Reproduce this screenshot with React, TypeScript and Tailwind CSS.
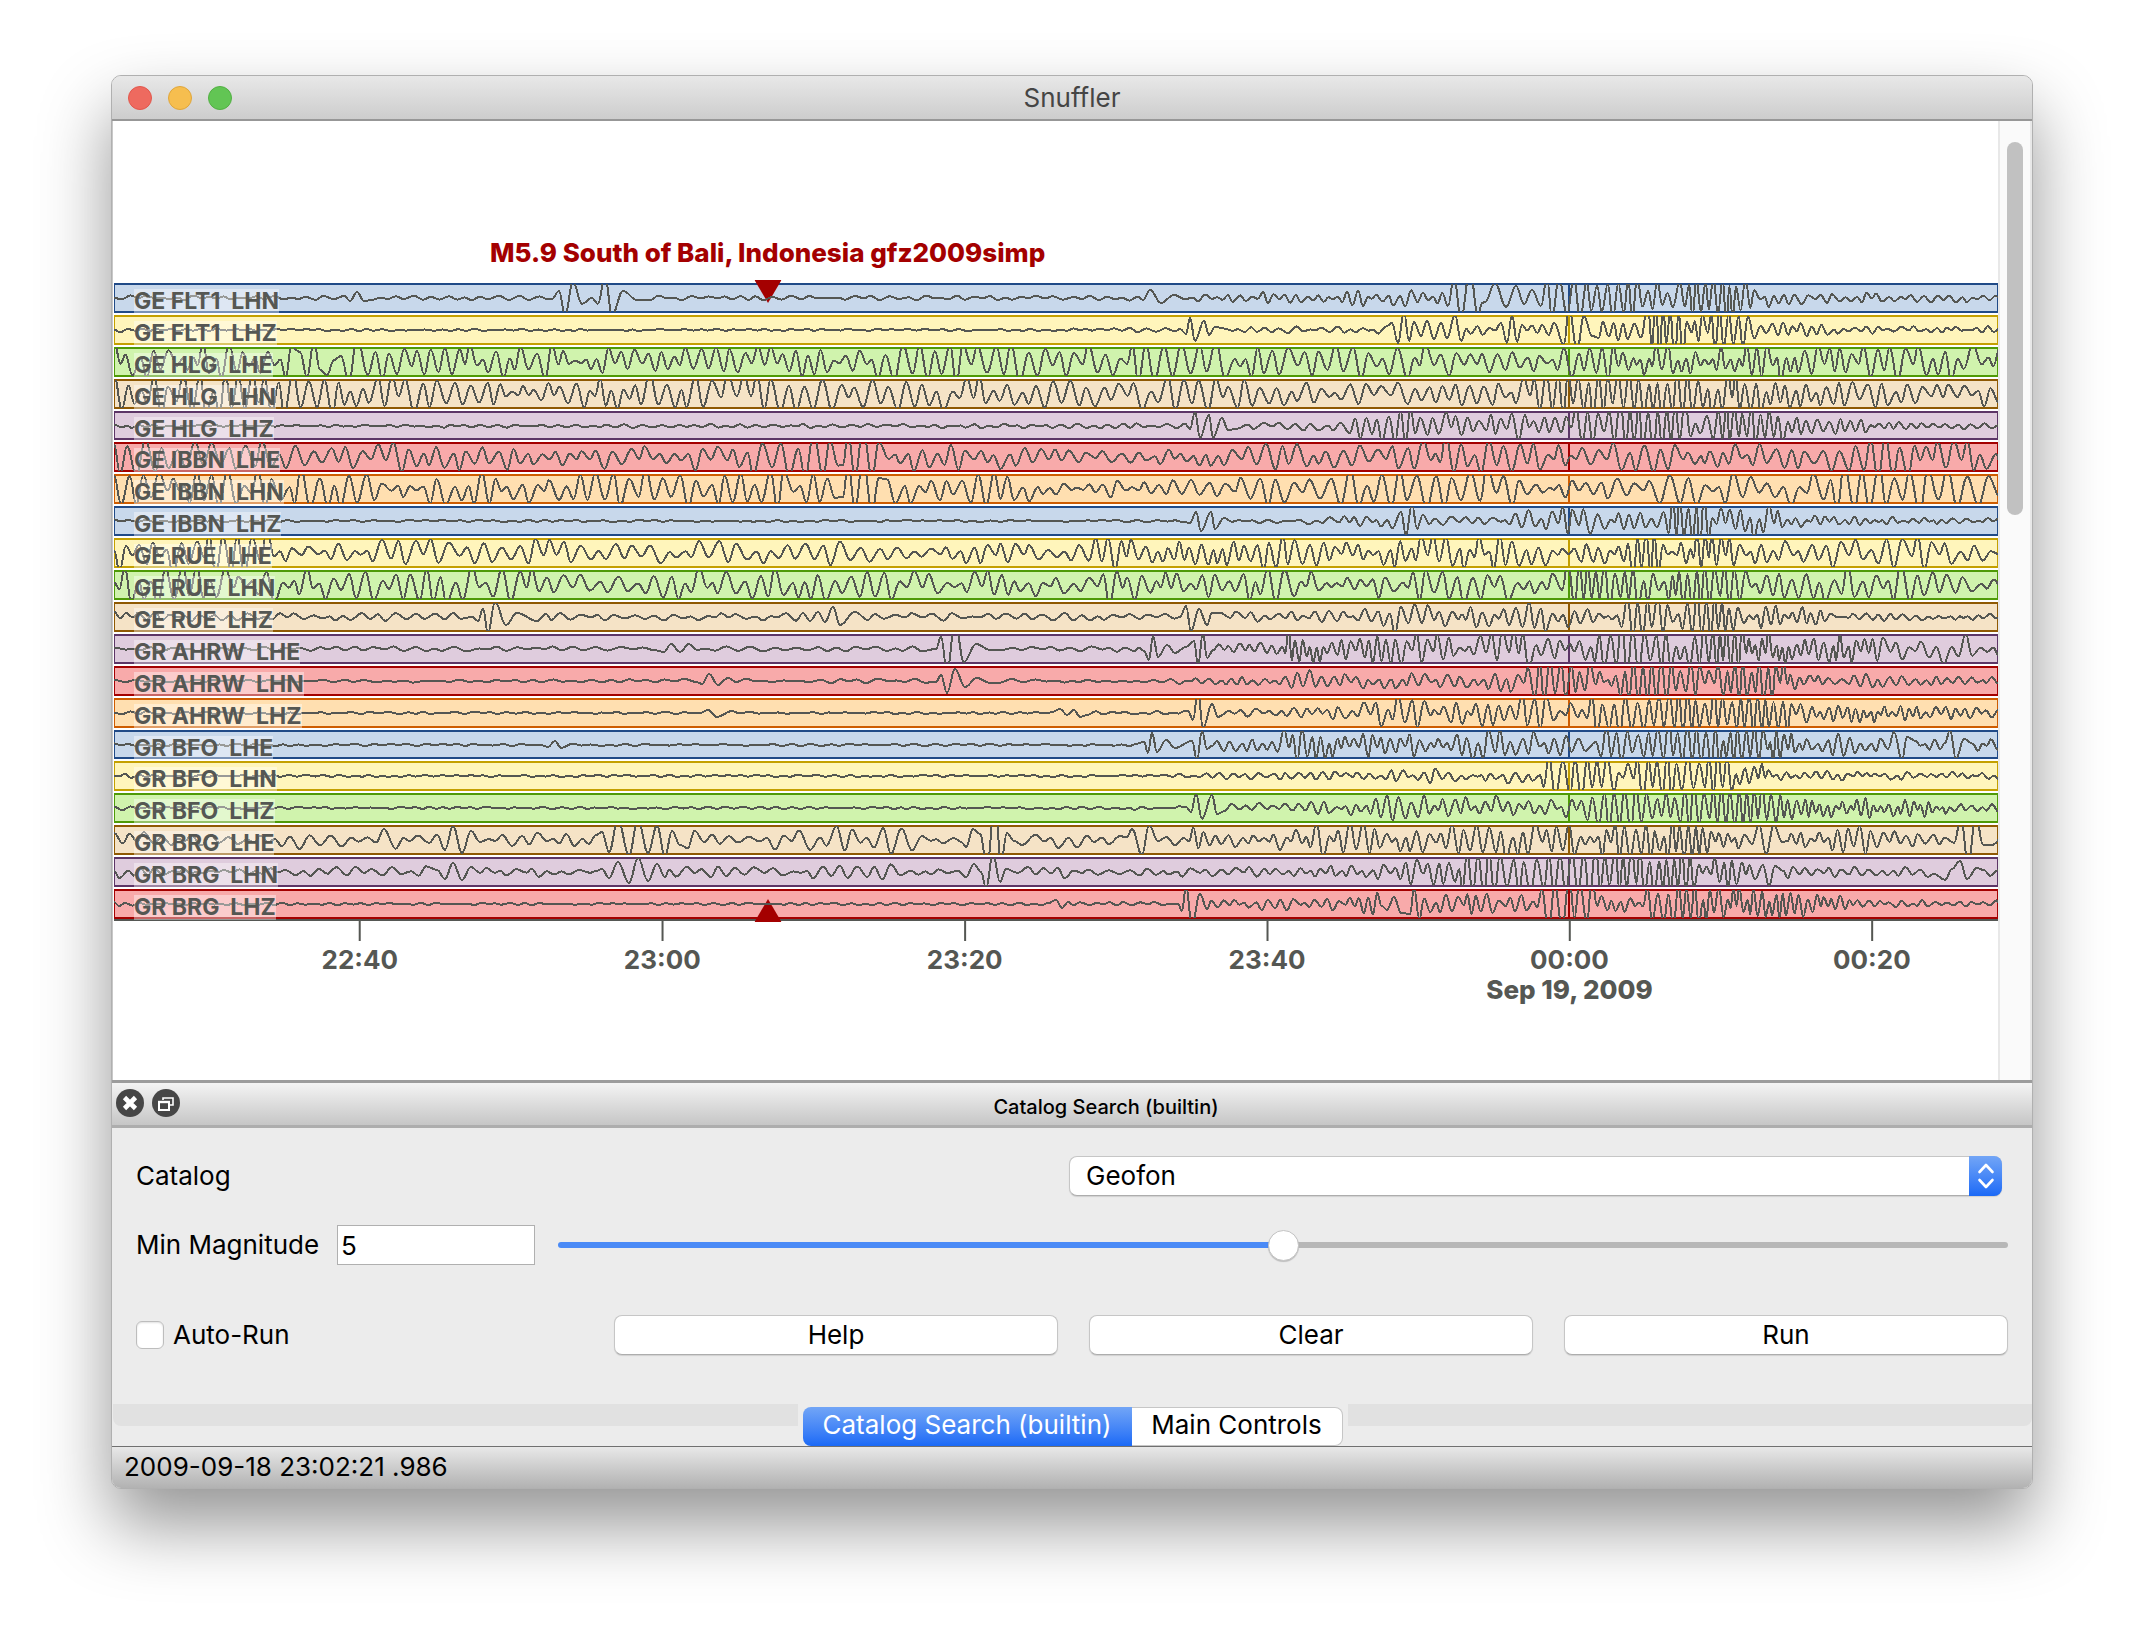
import { useMemo, useState } from 'react';
import clsx from 'clsx';

type Point = [x: number, y: number];

// Keyframes are [x, amplitude, distance between extrema]; pulses are explicit extrema.
type Track = {
  name: string;
  quiet: [x: number, amp: number, step: number][];
  pulses: Point[][];
};

const PLOT_LEFT = 114;
const PLOT_WIDTH = 1884;
const START_MINUTE = 1343.74;
const SPAN_MINUTES = 124.6;

const PALETTE = [
  'bg-[#c8d8eb] border-[#204a87] text-[#204a87]',
  'bg-[#fff5bb] border-[#c4a000] text-[#c4a000]',
  'bg-[#d0f3ad] border-[#4e9a06] text-[#4e9a06]',
  'bg-[#f5e3c6] border-[#8f5902] text-[#8f5902]',
  'bg-[#dfccdd] border-[#5c3566] text-[#5c3566]',
  'bg-[#f8aaaa] border-[#a40000] text-[#a40000]',
  'bg-[#ffdfb0] border-[#ce5c00] text-[#ce5c00]',
];

const TRACKS: Track[] = [
  {
    name: 'GE FLT1  LHN',
    quiet: [[114, 2, 9], [1100, 2, 9], [1200, 3, 7], [1280, 5, 6], [1360, 6, 6], [1440, 10, 6], [1580, 20, 5], [1655, 15, 5], [1670, 7, 6], [1682, 18, 4], [1742, 22, 4], [1752, 8, 5], [1800, 5, 6], [1900, 4, 6], [1998, 3, 6]],
    pulses: [
      [[350, -3], [357, 6], [364, -3]],
      [[552, -1], [559, 7], [565, -17], [573, 16], [582, -6], [592, 0], [598, -6], [605, 22], [612, -17], [623, 7], [637, -2]],
      [[1143, -2], [1150, 8], [1161, -5], [1174, 3]],
      [[1448, -8], [1454, 20], [1461, -20], [1470, 28], [1478, -18], [1482, -5], [1485, -4], [1495, 15], [1506, -9], [1516, 12], [1524, -6], [1532, 8], [1541, -8], [1547, 20], [1552, -20], [1559, 20], [1567, -16], [1574, 20], [1580, -20]],
    ],
  },
  {
    name: 'GE FLT1  LHZ',
    quiet: [[114, 2, 7], [150, 1, 8], [1050, 1, 8], [1150, 2, 8], [1220, 3, 8], [1380, 3, 7], [1465, 4, 6], [1530, 4, 6], [1600, 8, 5], [1642, 9, 6], [1652, 28, 4], [1682, 26, 4], [1690, 9, 5], [1715, 17, 4], [1746, 18, 5], [1752, 7, 6], [1790, 7, 5], [1850, 3, 6], [1998, 3, 6]],
    pulses: [
      [[1180, 1], [1186, -4], [1190, 12], [1195, -11], [1204, 9], [1209, -5], [1215, 3]],
      [[1392, 7], [1398, -13], [1404, 18], [1409, -11], [1414, 8], [1421, -6], [1427, 9], [1434, -9], [1441, 7], [1447, -8], [1455, 15], [1461, -11]],
      [[1501, 7], [1507, -13], [1512, 15], [1517, -12], [1522, 5]],
      [[1554, 7], [1564, -15], [1569, 22], [1577, -20], [1584, 14], [1592, -6]],
    ],
  },
  {
    name: 'GE HLG  LHE',
    quiet: [[114, 16, 7], [420, 15, 7], [560, 14, 7], [640, 10, 7], [760, 13, 7], [850, 12, 8], [930, 18, 8], [1080, 14, 8], [1260, 17, 8], [1420, 16, 8], [1480, 8, 7], [1550, 10, 7], [1640, 17, 5], [1690, 12, 5], [1760, 17, 5], [1830, 13, 6], [1998, 16, 8]],
    pulses: [
      [[300, 10], [307, -15], [314, 20], [320, -8], [327, -13], [334, 2], [341, 6], [349, -20], [357, 24], [368, -13]],
    ],
  },
  {
    name: 'GE HLG  LHN',
    quiet: [[114, 15, 8], [300, 19, 7], [460, 13, 8], [520, 7, 7], [620, 16, 7], [730, 17, 8], [860, 12, 8], [960, 16, 8], [1060, 10, 8], [1180, 15, 8], [1300, 10, 8], [1450, 9, 8], [1540, 16, 6], [1620, 20, 5], [1770, 16, 5], [1840, 10, 7], [1998, 11, 8]],
    pulses: [],
  },
  {
    name: 'GE HLG  LHZ',
    quiet: [[114, 2, 7], [160, 1, 8], [1080, 2, 8], [1180, 2, 8], [1240, 3, 8], [1340, 4, 8], [1362, 13, 6], [1405, 16, 6], [1455, 11, 6], [1480, 6, 6], [1510, 14, 6], [1535, 6, 5], [1568, 9, 5], [1574, 24, 6], [1598, 18, 6], [1606, 7, 6], [1616, 26, 5], [1688, 26, 5], [1698, 9, 6], [1718, 18, 4], [1780, 18, 4], [1788, 8, 5], [1850, 6, 5], [1900, 3, 6], [1998, 3, 6]],
    pulses: [[[1190, -3], [1195, 14], [1200, -12], [1209, 11], [1213, -12], [1222, 8], [1228, -4]]],
  },
  {
    name: 'GE IBBN  LHE',
    quiet: [[114, 14, 8], [260, 14, 8], [330, 9, 8], [430, 13, 8], [500, 10, 8], [720, 13, 8], [850, 20, 8], [880, 11, 8], [1040, 11, 8], [1070, 5, 9], [1190, 6, 7], [1270, 11, 8], [1400, 9, 8], [1440, 18, 7], [1520, 13, 7], [1580, 8, 7], [1640, 14, 8], [1700, 6, 6], [1750, 12, 8], [1830, 11, 8], [1890, 20, 7], [1998, 11, 8]],
    pulses: [[[843, -8], [848, 24], [855, -20], [863, 28], [872, -20], [879, 15]]],
  },
  {
    name: 'GE IBBN  LHN',
    quiet: [[114, 16, 7], [300, 17, 8], [400, 11, 8], [520, 17, 8], [720, 16, 8], [860, 16, 8], [930, 10, 8], [1000, 16, 8], [1060, 7, 8], [1170, 7, 8], [1260, 13, 9], [1380, 16, 9], [1500, 18, 8], [1540, 6, 7], [1590, 8, 8], [1660, 14, 9], [1780, 12, 9], [1860, 22, 8], [1950, 18, 9], [1998, 12, 9]],
    pulses: [[[843, -8], [848, 26], [855, -20], [863, 30], [872, -22], [879, 11]]],
  },
  {
    name: 'GE IBBN  LHZ',
    quiet: [[114, 2, 9], [200, 1, 9], [1180, 1, 9], [1300, 2, 8], [1320, 4, 8], [1365, 7, 6], [1425, 5, 7], [1500, 3, 7], [1525, 10, 6], [1555, 10, 5], [1582, 18, 6], [1610, 9, 6], [1664, 9, 6], [1670, 26, 4], [1706, 24, 4], [1714, 11, 5], [1778, 16, 5], [1786, 5, 5], [1850, 4, 5], [1998, 2, 6]],
    pulses: [
      [[1190, -2], [1196, 9], [1201, -10], [1211, 9], [1215, -8], [1224, 3]],
      [[1401, 9], [1406, -14], [1412, 17], [1417, -8]],
    ],
  },
  {
    name: 'GE RUE  LHE',
    quiet: [[114, 15, 8], [272, 19, 7], [284, 9, 8], [440, 11, 9], [540, 12, 9], [580, 6, 9], [680, 9, 9], [860, 10, 9], [930, 4, 8], [1000, 13, 7], [1050, 4, 9], [1110, 15, 7], [1150, 8, 6], [1280, 17, 6], [1330, 7, 7], [1400, 15, 6], [1510, 14, 6], [1570, 7, 6], [1622, 9, 5], [1632, 24, 4], [1658, 20, 4], [1670, 6, 6], [1690, 18, 4], [1728, 16, 5], [1745, 8, 6], [1860, 12, 9], [1920, 14, 8], [1998, 6, 8]],
    pulses: [],
  },
  {
    name: 'GE RUE  LHN',
    quiet: [[114, 16, 8], [280, 17, 7], [340, 10, 8], [400, 16, 8], [560, 12, 8], [600, 6, 9], [700, 14, 8], [920, 14, 9], [940, 6, 9], [1000, 16, 7], [1050, 6, 9], [1110, 16, 7], [1200, 9, 7], [1270, 16, 8], [1340, 7, 7], [1430, 14, 8], [1560, 17, 8], [1575, 22, 4], [1640, 18, 5], [1660, 8, 6], [1672, 20, 4], [1738, 17, 5], [1770, 8, 6], [1830, 17, 8], [1930, 17, 8], [1965, 5, 8], [1998, 5, 8]],
    pulses: [],
  },
  {
    name: 'GE RUE  LHZ',
    quiet: [[114, 4, 8], [270, 3, 9], [780, 3, 10], [1170, 3, 9], [1210, 4, 8], [1360, 5, 7], [1395, 14, 6], [1440, 10, 6], [1490, 8, 6], [1558, 16, 6], [1572, 7, 6], [1612, 4, 6], [1630, 20, 5], [1662, 20, 5], [1672, 5, 5], [1690, 19, 4], [1728, 19, 4], [1745, 8, 6], [1777, 11, 5], [1812, 7, 5], [1835, 3, 6], [1998, 3, 6]],
    pulses: [
      [[472, 0], [478, -4], [483, 8], [488, -16], [495, 15], [506, -8], [517, 4], [537, -4], [546, 3]],
      [[803, 4], [810, -4], [818, 5], [825, -5], [833, 10], [840, -8], [855, 5], [868, -3]],
      [[1180, 0], [1186, 11], [1191, -14], [1199, 8], [1207, -8], [1212, 4]],
    ],
  },
  {
    name: 'GR AHRW  LHE',
    quiet: [[114, 2, 10], [900, 2, 11], [1100, 2, 9], [1215, 5, 6], [1278, 5, 5], [1286, 18, 4], [1312, 15, 4], [1325, 7, 5], [1400, 15, 5], [1470, 10, 6], [1525, 19, 6], [1550, 7, 6], [1600, 11, 6], [1612, 24, 5], [1658, 20, 5], [1680, 10, 6], [1696, 22, 4], [1725, 20, 4], [1782, 14, 4], [1800, 7, 5], [1850, 13, 4], [1870, 14, 6], [1900, 9, 7], [1950, 14, 8], [1998, 9, 8]],
    pulses: [
      [[664, -3], [671, 5], [680, -3], [689, 5], [697, -1]],
      [[936, 0], [941, 12], [947, -22], [955, 26], [964, -13], [976, 5], [990, -1]],
      [[1139, 1], [1144, -2], [1149, -11], [1153, 13], [1158, -8], [1167, 4], [1175, -4], [1186, 2], [1194, 8], [1198, -16], [1203, 16], [1207, -9]],
    ],
  },
  {
    name: 'GR AHRW  LHN',
    quiet: [[114, 1, 10], [900, 2, 11], [1140, 1, 9], [1180, 3, 6], [1285, 4, 6], [1305, 9, 6], [1330, 6, 6], [1480, 7, 6], [1520, 9, 6], [1536, 19, 5], [1592, 18, 5], [1608, 4, 5], [1628, 20, 5], [1690, 20, 5], [1712, 10, 5], [1726, 20, 4], [1786, 17, 4], [1798, 5, 5], [1850, 3, 6], [1865, 8, 6], [1890, 4, 6], [1998, 3, 6]],
    pulses: [
      [[702, -3], [709, 7], [718, -4], [728, 3]],
      [[936, -1], [941, 6], [947, -12], [955, 12], [965, -6], [977, 3], [990, -2]],
    ],
  },
  {
    name: 'GR AHRW  LHZ',
    quiet: [[114, 2, 9], [220, 1, 9], [1050, 1, 8], [1180, 2, 8], [1225, 3, 7], [1350, 6, 6], [1400, 15, 6], [1480, 12, 6], [1512, 6, 6], [1524, 22, 6], [1560, 12, 7], [1590, 18, 6], [1660, 20, 5], [1786, 18, 4], [1796, 8, 5], [1860, 8, 4], [1940, 5, 5], [1998, 4, 6]],
    pulses: [
      [[700, 0], [708, 3], [717, -4], [732, 2]],
      [[1060, 4], [1067, -2], [1074, 3], [1080, -4]],
      [[1188, 2], [1193, -7], [1198, 22], [1203, -15], [1212, 9], [1218, -4]],
    ],
  },
  {
    name: 'GR BFO  LHE',
    quiet: [[114, 2, 8], [150, 1, 9], [1050, 1, 9], [1140, 1, 8], [1215, 5, 6], [1275, 5, 6], [1284, 15, 4], [1350, 12, 5], [1400, 10, 5], [1500, 13, 6], [1560, 8, 6], [1590, 5, 9], [1608, 20, 5], [1640, 14, 5], [1660, 20, 5], [1720, 18, 4], [1792, 16, 4], [1802, 5, 5], [1845, 10, 5], [1870, 5, 6], [1910, 5, 6], [1998, 6, 6]],
    pulses: [
      [[548, -2], [555, 4], [561, -3]],
      [[1144, 3], [1148, -8], [1152, 12], [1157, -7], [1166, 5], [1175, -3], [1192, 4], [1197, -15], [1202, 14], [1207, -4]],
      [[1888, -4], [1894, 13], [1902, -15], [1907, 8]],
      [[1945, 2], [1950, 15], [1956, -14], [1964, 6]],
    ],
  },
  {
    name: 'GR BFO  LHN',
    quiet: [[114, 2, 7], [150, 1, 8], [1160, 1, 8], [1180, 2, 7], [1350, 4, 6], [1440, 6, 6], [1480, 3, 6], [1510, 7, 6], [1540, 5, 6], [1552, 20, 6], [1600, 18, 6], [1625, 10, 6], [1640, 20, 5], [1728, 18, 5], [1736, 6, 5], [1765, 10, 4], [1782, 3, 5], [1840, 4, 5], [1998, 3, 6]],
    pulses: [],
  },
  {
    name: 'GR BFO  LHZ',
    quiet: [[114, 2, 7], [150, 1, 8], [1050, 1, 8], [1180, 2, 7], [1222, 3, 7], [1350, 6, 6], [1400, 13, 6], [1450, 7, 6], [1500, 12, 6], [1540, 5, 5], [1584, 10, 6], [1592, 22, 6], [1660, 18, 5], [1784, 18, 4], [1794, 7, 4], [1860, 8, 4], [1930, 7, 4], [1965, 3, 6], [1998, 3, 6]],
    pulses: [[[1186, 1], [1191, -4], [1196, 14], [1202, -11], [1212, 13], [1217, -6]]],
  },
  {
    name: 'GR BRG  LHE',
    quiet: [[114, 7, 8], [270, 3, 8], [300, 8, 9], [380, 9, 10], [430, 3, 9], [490, 4, 9], [600, 8, 9], [680, 12, 9], [720, 4, 9], [780, 8, 9], [900, 14, 9], [925, 3, 9], [970, 3, 9], [1020, 5, 9], [1065, 10, 10], [1090, 3, 9], [1120, 4, 9], [1160, 4, 8], [1190, 14, 6], [1210, 6, 7], [1280, 8, 6], [1340, 16, 6], [1400, 11, 6], [1550, 16, 6], [1620, 18, 5], [1700, 16, 4], [1720, 8, 5], [1800, 6, 5], [1860, 12, 5], [1900, 6, 6], [1940, 5, 7], [1998, 5, 7]],
    pulses: [
      [[437, 5], [445, -10], [453, 14], [462, -13], [471, 9], [480, -2]],
      [[602, 8], [609, -12], [618, 20], [629, -15], [638, 20], [648, -13], [657, 14], [665, -16], [672, 9], [680, -5]],
      [[966, -7], [973, 11], [980, 6], [987, -26], [995, 38], [1001, -22], [1007, 7], [1014, -1], [1022, -5]],
      [[1127, 3], [1132, 11], [1142, -15], [1149, 15], [1158, -1]],
      [[1752, -4], [1759, 16], [1766, -14], [1774, 15], [1782, -2]],
      [[1954, -3], [1961, 22], [1968, -24], [1976, 24], [1983, -5]],
    ],
  },
  {
    name: 'GR BRG  LHN',
    quiet: [[114, 5, 8], [200, 2, 8], [340, 4, 9], [480, 5, 9], [600, 4, 9], [680, 4, 9], [780, 5, 9], [900, 6, 9], [930, 2, 9], [970, 2, 9], [1060, 6, 9], [1100, 3, 9], [1200, 4, 8], [1280, 4, 6], [1400, 8, 6], [1440, 16, 5], [1500, 20, 6], [1600, 20, 5], [1690, 20, 4], [1702, 8, 5], [1722, 22, 4], [1740, 8, 5], [1800, 4, 6], [1940, 4, 7], [1998, 3, 7]],
    pulses: [
      [[437, 2], [445, -7], [453, 9], [462, -8], [471, 5], [480, -1]],
      [[602, 3], [609, -6], [618, 10], [629, -11], [638, 14], [648, -9], [657, 8], [665, -5]],
      [[966, -5], [974, 8], [981, 0], [986, -16], [993, 18], [1000, -10], [1006, 3], [1018, -1], [1028, 5]],
      [[1763, 7], [1769, -14], [1775, 6]],
      [[1934, -2], [1945, -8], [1952, 3], [1960, 11], [1967, -7], [1977, 4]],
    ],
  },
  {
    name: 'GR BRG  LHZ',
    quiet: [[114, 2, 6], [150, 1, 8], [1040, 1, 8], [1170, 2, 8], [1215, 3, 7], [1280, 7, 6], [1310, 4, 6], [1380, 9, 5], [1405, 14, 5], [1440, 9, 5], [1530, 7, 6], [1548, 22, 6], [1592, 22, 6], [1603, 5, 5], [1640, 8, 5], [1650, 22, 5], [1740, 15, 4], [1790, 11, 4], [1845, 7, 4], [1858, 3, 6], [1998, 3, 6]],
    pulses: [
      [[1056, 4], [1062, -4], [1068, 2]],
      [[1178, 0], [1182, -7], [1186, 17], [1192, -20], [1200, 10], [1207, -5]],
      [[1387, -6], [1394, 7], [1401, -9]],
    ],
  },
];

const TICKS = [
  { minute: 1360, time: '22:40' },
  { minute: 1380, time: '23:00' },
  { minute: 1400, time: '23:20' },
  { minute: 1420, time: '23:40' },
  { minute: 1440, time: '00:00', date: 'Sep 19, 2009' },
  { minute: 1460, time: '00:20' },
];

const EVENT_MINUTE = 1386.97;

const atMinute = (minute: number) => `${((minute - START_MINUTE) / SPAN_MINUTES) * 100}%`;

function seededRandom(seed: number) {
  let state = seed;
  return () => {
    state = (state + 0x6d2b79f5) | 0;
    let t = Math.imul(state ^ (state >>> 15), 1 | state);
    t = (t + Math.imul(t ^ (t >>> 7), 61 | t)) ^ t;
    return ((t ^ (t >>> 14)) >>> 0) / 4294967296;
  };
}

function buildTrace(track: Track, seed: number) {
  const random = seededRandom(seed);
  const points: Point[] = [];
  let x = PLOT_LEFT;
  let sign = 1;
  let key = 0;
  while (x < PLOT_LEFT + PLOT_WIDTH + 8) {
    while (key < track.quiet.length - 2 && x >= track.quiet[key + 1][0]) key++;
    const [x0, a0, s0] = track.quiet[key];
    const [x1, a1, s1] = track.quiet[key + 1];
    const f = Math.min(1, (x - x0) / (x1 - x0));
    const amp = a0 + (a1 - a0) * f;
    const step = s0 + (s1 - s0) * f;
    const minor = random() < 0.26 && amp < 18;
    points.push([x, sign * amp * (minor ? 0.1 + random() * 0.2 : 0.45 + random() * 0.85)]);
    sign = -sign;
    x += step * (minor ? 0.6 + random() * 0.3 : 0.75 + random() * 0.5);
  }
  let merged = points;
  for (const pulse of track.pulses) {
    const from = pulse[0][0] - 4;
    const to = pulse[pulse.length - 1][0] + 4;
    merged = [...merged.filter((p) => p[0] < from || p[0] > to), ...pulse];
  }
  merged.sort((a, b) => a[0] - b[0]);
  const local = merged.map(([px, py]) => [px - PLOT_LEFT, 15 - py] as Point);
  return local.reduce((d, [px, py], i) => {
    if (i === 0) return `M${px.toFixed(1)} ${py.toFixed(1)}`;
    const [qx, qy] = local[i - 1];
    const h = (px - qx) * 0.4;
    return `${d}C${(qx + h).toFixed(1)} ${qy.toFixed(1)} ${(px - h).toFixed(1)} ${py.toFixed(1)} ${px.toFixed(1)} ${py.toFixed(1)}`;
  }, '');
}

function TrackRow({ track, index }: { track: Track; index: number }) {
  const path = useMemo(() => buildTrace(track, 101 + index * 37), [track, index]);
  return (
    <li className={clsx('relative min-h-0 border-x border-y-2', PALETTE[index % PALETTE.length])}>
      <span className="absolute inset-y-0 w-[2px] -translate-x-1/2 bg-current" style={{ left: atMinute(1440) }} />
      <svg
        className="absolute -inset-x-px -inset-y-px z-10 h-[calc(100%+2px)] w-[calc(100%+2px)] overflow-hidden"
        viewBox={`0 1 ${PLOT_WIDTH} 28`}
        preserveAspectRatio="none"
        aria-hidden="true"
      >
        <path d={path} fill="none" stroke="#555753" strokeWidth="2" strokeLinejoin="round" vectorEffect="non-scaling-stroke" shapeRendering="crispEdges" />
      </svg>
      <span className="absolute left-[19px] top-1 z-20 whitespace-pre bg-white/40 text-[23px] font-bold leading-[25px] text-[#555753]">
        {track.name}
      </span>
    </li>
  );
}

function EventMarker({ up }: { up?: boolean }) {
  return (
    <svg
      className={clsx('absolute z-[5] h-[23px] w-[27px] -translate-x-1/2', up ? '-bottom-[3px]' : '-top-[3px]')}
      style={{ left: atMinute(EVENT_MINUTE) }}
      viewBox="0 0 27 23"
      aria-hidden="true"
    >
      <path d={up ? 'M0 23L13.5 0L27 23Z' : 'M0 0L13.5 23L27 0Z'} fill="#a40000" />
    </svg>
  );
}

function TracePlot() {
  return (
    <div className="min-w-0 flex-1 pb-[72px] pl-px pt-[108px]">
      <div className="relative h-[54px]">
        <p
          className="absolute top-2 -translate-x-1/2 whitespace-nowrap text-[26px] font-extrabold leading-[32px] text-[#a40000]"
          style={{ left: atMinute(EVENT_MINUTE) }}
        >
          M5.9 South of Bali, Indonesia gfz2009simp
        </p>
      </div>
      <div className="relative">
        <ul className="grid h-[636px] grid-rows-[repeat(20,minmax(0,1fr))] gap-[2px]">
          {TRACKS.map((track, i) => (
            <TrackRow key={track.name} track={track} index={i} />
          ))}
        </ul>
        <EventMarker />
        <EventMarker up />
      </div>
      <div className="relative h-[89px] border-t-2 border-[#555753]">
        {TICKS.map((tick) => (
          <div
            key={tick.time}
            className="absolute top-0 flex -translate-x-1/2 flex-col items-center whitespace-nowrap text-[26px] font-bold leading-[30px] text-[#555753]"
            style={{ left: atMinute(tick.minute) }}
          >
            <span className="mb-1 h-5 w-[2px] bg-[#555753]" />
            <span>{tick.time}</span>
            {tick.date && <span className="font-extrabold">{tick.date}</span>}
          </div>
        ))}
      </div>
    </div>
  );
}

function TitleBar() {
  return (
    <header className="grid h-[45px] grid-cols-[1fr_auto_1fr] items-center border-b-2 border-[#979797] bg-linear-to-b from-[#e8e8e8] to-[#cdcdcd] px-4">
      <div className="flex gap-4">
        <button type="button" aria-label="Close" className="size-6 rounded-full border border-[#e2574c] bg-[#ee6a5f]" />
        <button type="button" aria-label="Minimize" className="size-6 rounded-full border border-[#e0a63b] bg-[#f6be4f]" />
        <button type="button" aria-label="Zoom" className="size-6 rounded-full border border-[#52b043] bg-[#62c554]" />
      </div>
      <h1 className="text-[26px] leading-8 text-[#454545]">Snuffler</h1>
    </header>
  );
}

function DockTitle() {
  return (
    <div className="flex h-[48px] items-center border-b-[3px] border-t-[3px] border-b-[#adadad] border-t-[#9c9c9c] bg-linear-to-b from-[#f4f4f4] to-[#c6c6c6] pl-1">
      <div className="flex gap-2 pb-[2px]">
        <button type="button" aria-label="Close panel">
          <svg className="size-7" viewBox="0 0 28 28">
            <circle cx="14" cy="14" r="14" fill="#464646" />
            <path d="M8.500 8.500L19.500 19.500M19.500 8.500L8.500 19.500" stroke="#fff" strokeWidth="4.600" />
          </svg>
        </button>
        <button type="button" aria-label="Float panel">
          <svg className="size-7" viewBox="0 0 28 28" fill="none" stroke="#fff">
            <circle cx="14" cy="14" r="14" fill="#464646" stroke="none" />
            <path d="M11 11V9H21V16H18" strokeWidth="1.6" />
            <path d="M7 13H17V21H7Z" strokeWidth="2" />
            <path d="M6 13H18" strokeWidth="2.4" />
          </svg>
        </button>
      </div>
      <h2 className="flex-1 pt-[5px] text-center text-[20px] font-medium leading-7 text-black">Catalog Search (builtin)</h2>
    </div>
  );
}

const PUSH_BUTTON =
  'h-10 rounded-lg border border-[#c6c6c6] border-b-[#adadad] bg-white text-[26px] leading-8 shadow-[0_1px_1px_rgba(0,0,0,0.12)]';

function CatalogPanel() {
  const [magnitude, setMagnitude] = useState(5);
  const [autoRun, setAutoRun] = useState(false);
  const filled = magnitude * 10;
  return (
    <section className="px-6 pt-7 text-[26px] leading-8 text-black">
      <div className="flex items-center pr-[6px]">
        <label htmlFor="catalog" className="flex-1">
          Catalog
        </label>
        <div className="relative flex-1">
          <select
            id="catalog"
            defaultValue="Geofon"
            className="block h-10 w-full appearance-none rounded-lg border border-[#c6c6c6] border-b-[#adadad] bg-white pl-4 leading-8 shadow-[0_1px_1px_rgba(0,0,0,0.12)]"
          >
            <option>Geofon</option>
          </select>
          <span className="pointer-events-none absolute inset-y-0 right-0 flex w-[33px] items-center justify-center rounded-r-lg bg-linear-to-b from-[#72a5f6] to-[#1a69f6]">
            <svg className="h-[26px] w-[18px]" viewBox="0 0 18 26" fill="none" stroke="#fff" strokeWidth="2.6" strokeLinecap="round" strokeLinejoin="round">
              <path d="M2.500 9L9 2L15.500 9" />
              <path d="M2.500 17L9 24L15.500 17" />
            </svg>
          </span>
        </div>
      </div>

      <div className="mt-[29px] flex items-center">
        <label htmlFor="magnitude" className="w-[201px]">
          Min Magnitude
        </label>
        <input
          id="magnitude"
          type="text"
          value={magnitude}
          onChange={(e) => setMagnitude(Math.min(10, Math.max(0, Number(e.target.value) || 0)))}
          className="h-10 w-[198px] border border-[#b0b0b0] bg-white px-[3px] leading-8"
        />
        <input
          type="range"
          aria-label="Min Magnitude"
          min={0}
          max={10}
          step={0.1}
          value={magnitude}
          onChange={(e) => setMagnitude(Number(e.target.value))}
          className="ml-[23px] h-[6px] min-w-0 flex-1 appearance-none rounded-full [&::-webkit-slider-thumb]:size-[31px] [&::-webkit-slider-thumb]:appearance-none [&::-webkit-slider-thumb]:rounded-full [&::-webkit-slider-thumb]:border [&::-webkit-slider-thumb]:border-[#c4c4c4] [&::-webkit-slider-thumb]:bg-white [&::-webkit-slider-thumb]:shadow-[0_1px_1px_rgba(0,0,0,0.2)]"
          style={{ background: `linear-gradient(to right, #4a8af6 ${filled}%, #b7b7b7 ${filled}%)` }}
        />
      </div>

      <div className="mt-[50px] grid grid-cols-[447px_1fr_1fr_1fr] items-center gap-x-[31px]">
        <label className="flex items-center gap-[9px]">
          <input
            type="checkbox"
            checked={autoRun}
            onChange={(e) => setAutoRun(e.target.checked)}
            className="size-7 appearance-none rounded-md border border-[#bdbdbd] bg-white shadow-[inset_0_1px_2px_rgba(0,0,0,0.12)] checked:bg-[#4a8af6]"
          />
          Auto-Run
        </label>
        <button type="button" className={PUSH_BUTTON}>Help</button>
        <button type="button" className={PUSH_BUTTON}>Clear</button>
        <button type="button" className={PUSH_BUTTON}>Run</button>
      </div>
    </section>
  );
}

function DockTabs() {
  return (
    <nav className="mt-[49px] flex h-[42px] items-start gap-[5px] pl-px text-[26px] leading-8">
      <span className="h-[22px] flex-1 rounded-bl-lg bg-[#e1e1e1]" />
      <div role="tablist" className="flex h-[39px] self-end">
        <button type="button" role="tab" aria-selected="true" className="w-[329px] rounded-l-lg bg-linear-to-b from-[#72a5f6] to-[#1a69f6] pb-1 text-white">
          Catalog Search (builtin)
        </button>
        <button type="button" role="tab" aria-selected="false" className="w-[211px] rounded-r-lg border border-l-0 border-[#c6c6c6] bg-white pb-1 text-black">
          Main Controls
        </button>
      </div>
      <span className="h-[22px] flex-1 rounded-br-lg bg-[#e1e1e1]" />
    </nav>
  );
}

export default function App() {
  return (
    <div className="bg-white px-[111px] pb-[148px] pt-[75px] font-['Inter',sans-serif]">
      <main className="overflow-hidden rounded-[10px] border border-[#b0b0b0] bg-[#ececec] shadow-[0_36px_70px_rgba(0,0,0,0.42)]">
        <TitleBar />
        <div className="flex border-l border-[#c8c8c8] bg-white">
          <TracePlot />
          <div className="w-[34px] border-l-2 border-r-2 border-[#e8e8e8] bg-[#fafafa] pl-[7px] pt-[21px]">
            <div className="h-[373px] w-4 rounded-full bg-[#c1c1c1]" />
          </div>
        </div>
        <DockTitle />
        <CatalogPanel />
        <DockTabs />
        <footer className="h-[42px] border-t border-[#707070] bg-linear-to-b from-[#e8e8e8] to-[#b2b2b2] pl-3 text-[26px] leading-10 text-black">
          2009-09-18 23:02:21 .986
        </footer>
      </main>
    </div>
  );
}
